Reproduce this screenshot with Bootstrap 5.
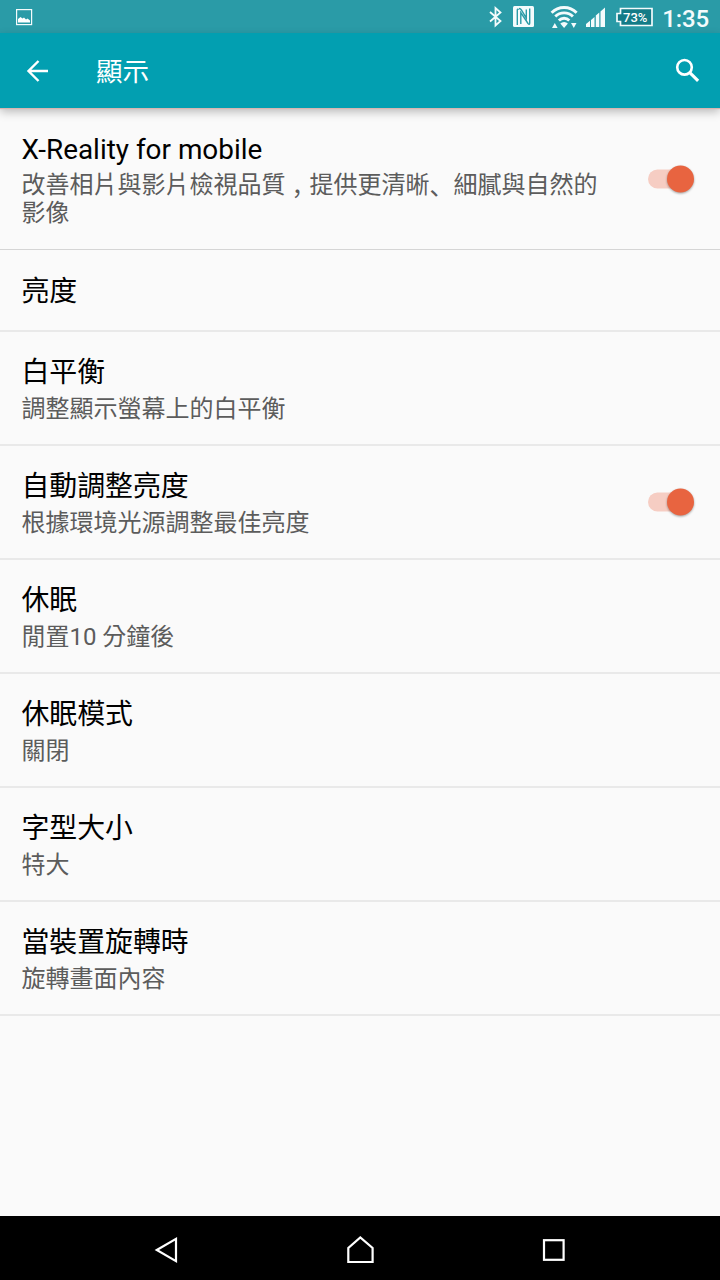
<!DOCTYPE html>
<html lang="zh-Hant">
<head>
<meta charset="utf-8">
<meta name="viewport" content="width=device-width, initial-scale=1">
<title>顯示</title>
<link href="https://cdn.jsdelivr.net/npm/bootstrap@5.3.0/dist/css/bootstrap.min.css" rel="stylesheet">
<style>
body{font-family:Roboto,"Noto Sans CJK TC",sans-serif;background:#fafafa;color:#000}
.screen{height:1280px;overflow:hidden}
.statusbar{height:33px;background:#2a9ba7;padding:0 11px 0 15px;color:#f4fbfc}
.clock{font-size:24px;line-height:30px;padding-top:4px;font-weight:500;letter-spacing:-.1px}
.appbar{height:75px;background:#029fb1;padding:0 20px 0 26px;box-shadow:0 1px 1px #d9b5b0,0 4px 9px rgba(0,0,0,.25);z-index:1}
.appbar h1{font-size:26.5px;line-height:36px;margin-left:47px;padding-top:2px}
.setting{height:114px;padding:23px 24px 0 21.4px;border:0;border-bottom:2px solid #e9e9e9;background:#fafafa;color:#000}
.setting:first-child{height:142px;padding-top:24px;border-bottom:1px solid #d5d5d5}
.setting:first-child .desc{margin-top:3px}
.single{height:82px;padding-top:24px}
.title{font-size:27.9px;line-height:36px}
.desc{font-size:24px;line-height:28px;color:#5c5c5c;margin-top:4px;width:590px}
.punct{font-family:"Noto Sans CJK SC",sans-serif;display:inline-block;width:24px;height:28px;line-height:28px;vertical-align:top}
.comma{text-indent:6px;white-space:nowrap}
.toggle{width:50px;height:36px;overflow:visible}
.navkeys{height:64px;background:#000}
</style>
</head>
<body>
<main class="screen d-flex flex-column">
<div class="statusbar d-flex align-items-center justify-content-between flex-shrink-0">
<svg width="18" height="18" viewBox="0 0 18 18"><rect x="1.600" y="1.600" width="15" height="15" fill="none" stroke="#f4fbfc" stroke-width="1.200"/><path d="M3 14.500v-3.500l2.500-2 2 1.500L9 9.500l2 2 1.500-1 2.500 2v2z" fill="#fff"/></svg>
<div class="d-flex align-items-center">
<svg width="168" height="33" viewBox="486 0 168 33">
<path d="M490 12l10.500 9-5 4.500V8l5 4.500L490 21.500" fill="none" stroke="#f4fbfc" stroke-width="1.800"/>
<rect x="513" y="6" width="21" height="21" rx="1.500" fill="#f4fbfc"/>
<path d="M517.300 25V10q0-1.500 1.500-.5M520.800 24V12.500L528 23.500q1.700 1.800 1.700-.5V8.500M519 8.500q1.500 0 2.200 1.200L526.300 18V9.500" fill="none" stroke="#2a9ba7" stroke-width="1.400"/>
<g fill="none" stroke="#f4fbfc" stroke-width="2.900"><path d="M551.600 12.800a17.500 17.500 0 0 1 25 0"/><path d="M555.300 16.600a12.300 12.300 0 0 1 17.600 0"/><path d="M558.900 20.400a7.300 7.300 0 0 1 10.400 0"/></g>
<path d="M560.300 23.500a5.300 5.300 0 0 1 7.600 0l-3.800 4.500zM552 28l2.800-5 2.800 5zM571 23h5.500l-2.700 5z" fill="#f4fbfc"/>
<path d="M586 27v-3l4-3.200V27zM591 27v-7l3.500-3v10zM595.800 27V15.500l3.500-3V27zM600.500 27V11.500l4.500-4V27z" fill="#f4fbfc"/>
<path d="M620.500 8.500h31.500v17h-31.500v-4h-3.500v-8h3.500z" fill="#137b87" stroke="#f4fbfc" stroke-width="1.700"/>
<text x="623" y="21.500" fill="#fff" font-family="Roboto,sans-serif" font-size="13" font-weight="500">73%</text>
</svg>
<span class="clock ms-2">1:35</span>
</div>
</div>
<header class="appbar d-flex align-items-center position-relative flex-shrink-0">
<svg width="23" height="24" viewBox="0 0 23 24"><path d="M12.500 2L2.500 12l10 10M2.500 12H22" fill="none" stroke="#fff" stroke-width="2.400"/></svg>
<h1 class="fw-normal text-white mb-0">顯示</h1>
<svg class="ms-auto" width="25" height="25" viewBox="0 0 25 25"><circle cx="9.500" cy="9.300" r="7.300" fill="none" stroke="#fff" stroke-width="2.600"/><path d="M14.800 14.600l8.300 8.300" stroke="#fff" stroke-width="3.100"/></svg>
</header>
<section class="list-group rounded-0 flex-grow-1">
<div class="list-group-item setting rounded-0 d-flex justify-content-between"><div><div class="title">X-Reality for mobile</div><div class="desc">改善相片與影片檢視品質<span class="punct comma" lang="zh-Hans">，</span>提供更清晰<span class="punct" lang="zh-Hans">、</span>細膩與自然的影像</div></div>
<svg class="toggle" style="margin-top:29px" viewBox="0 0 50 36"><use href="#switch-on"/></svg></div>
<div class="list-group-item setting single rounded-0"><div class="title">亮度</div></div>
<div class="list-group-item setting rounded-0"><div class="title">白平衡</div><div class="desc">調整顯示螢幕上的白平衡</div></div>
<div class="list-group-item setting rounded-0 d-flex justify-content-between"><div><div class="title">自動調整亮度</div><div class="desc">根據環境光源調整最佳亮度</div></div>
<svg class="toggle" style="margin-top:15px" viewBox="0 0 50 36"><defs><g id="switch-on"><rect x="2" y="8.500" width="40" height="19" rx="9.500" fill="#f6cdc3"/><circle cx="34.500" cy="18" r="13.500" fill="#e86440" style="filter:drop-shadow(0 1.500px 1px rgba(0,0,0,.35))"/></g></defs><use href="#switch-on"/></svg></div>
<div class="list-group-item setting rounded-0"><div class="title">休眠</div><div class="desc">閒置10 分鐘後</div></div>
<div class="list-group-item setting rounded-0"><div class="title">休眠模式</div><div class="desc">關閉</div></div>
<div class="list-group-item setting rounded-0"><div class="title">字型大小</div><div class="desc">特大</div></div>
<div class="list-group-item setting rounded-0"><div class="title">當裝置旋轉時</div><div class="desc">旋轉畫面內容</div></div>
</section>
<nav class="navkeys flex-shrink-0">
<svg width="720" height="64" viewBox="0 0 720 64" fill="none" stroke="#fff" stroke-width="2.200"><path d="M156.800 34l19.200-11.200v22.400z"/><path d="M348.300 46V32l12-10.500 12.300 10.500v14z"/><rect x="544" y="24.200" width="19.600" height="19.600"/></svg>
</nav>
</main>
<script src="https://cdn.jsdelivr.net/npm/bootstrap@5.3.0/dist/js/bootstrap.bundle.min.js"></script>
</body>
</html>
